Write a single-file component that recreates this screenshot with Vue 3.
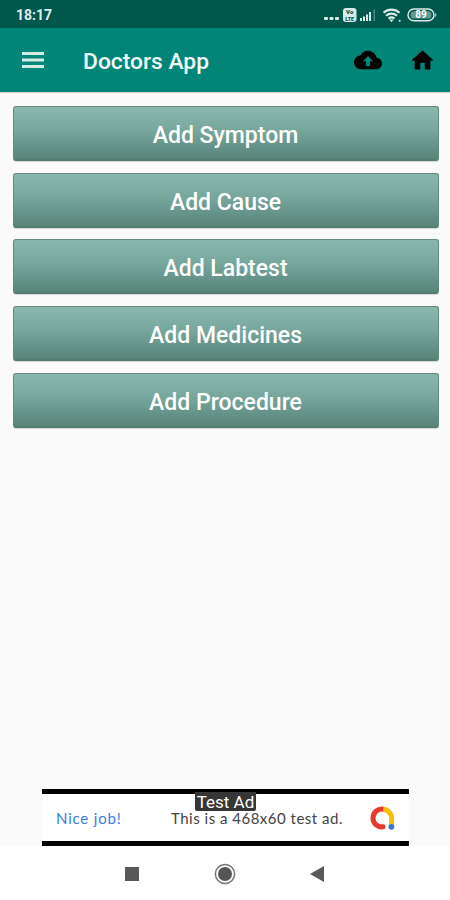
<template>
  <div class="screen">
    <!-- Status bar -->
    <div class="status-bar">
      <span class="clock">18:17</span>
      <svg class="status-icons" width="114" height="18" viewBox="0 0 114 18">
        <g fill="#d9ebe7">
          <rect x="1" y="12" width="4" height="3" rx="1" />
          <rect x="6.5" y="12" width="4" height="3" rx="1" />
          <rect x="12" y="12" width="4" height="3" rx="1" />
          <rect x="20" y="3" width="13.5" height="14" rx="3" />
          <rect x="37" y="13" width="2" height="3" />
          <rect x="40" y="11.5" width="2" height="4.5" />
          <rect x="43" y="9.5" width="2" height="6.5" />
          <rect x="46" y="7" width="2" height="9" />
          <rect x="50.5" y="4.5" width="1.5" height="11.5" opacity="0.35" />
        </g>
        <g fill="#00574b" font-family="Roboto, sans-serif" font-size="6" font-weight="900" text-anchor="middle">
          <text x="26.7" y="9.2">Vo</text>
          <text x="26.7" y="15.6" font-size="5.5">LTE</text>
        </g>
        <g fill="none" stroke="#d9ebe7" stroke-width="2.2">
          <path d="M60.5 7.7a12 12 0 0 1 16 0" />
          <path d="M63 10.7a8.3 8.3 0 0 1 11 0" />
          <path d="M65.6 13.6a4.6 4.6 0 0 1 5.8 0" />
        </g>
        <path d="M66.3 14.6h4.4l-2.2 2.6z" fill="#d9ebe7" />
        <circle cx="76.7" cy="15.8" r="1" fill="#d9ebe7" />
        <rect x="85" y="4" width="26" height="11.8" rx="5.9" fill="none" stroke="#d9ebe7" stroke-width="1.4" />
        <rect x="87.5" y="6.3" width="21" height="7.2" rx="3.6" fill="#d9ebe7" opacity="0.45" />
        <path d="M112.3 7.8q2 2.2 0 4.5z" fill="#d9ebe7" />
        <text x="98" y="13.4" fill="#fff" font-family="Roboto, sans-serif" font-size="10" font-weight="700" text-anchor="middle">89</text>
      </svg>
    </div>

    <!-- Toolbar -->
    <header class="toolbar">
      <button class="icon-btn menu-btn" aria-label="Menu">
        <svg width="22" height="16" viewBox="0 0 22 16">
          <path d="M0 1.5h22M0 8h22M0 14.5h22" stroke="#d5ede8" stroke-width="2.8" />
        </svg>
      </button>
      <h1 class="title">Doctors App</h1>
      <button class="icon-btn cloud-btn" aria-label="Upload">
        <svg width="28" height="28" viewBox="0 0 24 24">
          <path d="M19.35 10.04C18.67 6.59 15.64 4 12 4 9.11 4 6.6 5.64 5.35 8.04 2.34 8.36 0 10.91 0 14c0 3.31 2.69 6 6 6h13c2.76 0 5-2.24 5-5 0-2.64-2.05-4.78-4.65-4.96z" />
          <path d="M13.7 13v4.3h-3.4V13H7.6L12 8.6l4.4 4.4z" fill="#008577" />
        </svg>
      </button>
      <button class="icon-btn" aria-label="Home">
        <svg width="27" height="27" viewBox="0 0 24 24">
          <path d="M10 20v-6h4v6h5v-8h3L12 3 2 12h3v8z" />
        </svg>
      </button>
    </header>

    <main class="actions">
      <button v-for="label in actions" :key="label" class="action-btn">{{ label }}</button>
    </main>

    <!-- Ad banner -->
    <div class="ad">
      <span class="ad-badge">Test Ad</span>
      <span class="ad-praise">Nice job!</span>
      <span class="ad-text">This is a 468x60 test ad.</span>
      <svg class="ad-logo" width="26" height="26" viewBox="0 0 26 26">
        <g fill="none" stroke-width="5">
          <path d="M12.5 4.2A9 9 0 0 1 21.6 13v7" stroke="#fbbc04" />
          <path d="M13.2 4.2a8.9 8.9 0 1 0 0 17.6" stroke="#e53b2c" />
        </g>
        <circle cx="13" cy="21.8" r="2.5" fill="#e53b2c" />
        <circle cx="21.4" cy="21.8" r="2.9" fill="#3478d4" />
      </svg>
    </div>

    <!-- System navigation -->
    <nav class="system-nav">
      <svg width="14" height="14" viewBox="0 0 14 14"><path d="M0 0h14v14H0z" fill="#595959" /></svg>
      <svg width="22" height="22" viewBox="0 0 22 22">
        <circle cx="11" cy="11" r="9.6" fill="none" stroke="#777" stroke-width="1.5" />
        <circle cx="11" cy="11" r="7" fill="#555" />
      </svg>
      <svg width="14" height="16" viewBox="0 0 14 16"><path d="M14 0v16L0 8z" fill="#595959" /></svg>
    </nav>
  </div>
</template>

<script setup>
const actions = ['Add Symptom', 'Add Cause', 'Add Labtest', 'Add Medicines', 'Add Procedure']
</script>

<style>
body {
  margin: 0;
}
</style>

<style scoped>
.screen {
  width: 450px;
  height: 900px;
  display: flex;
  flex-direction: column;
  background: #fafafa;
  font-family: Roboto, sans-serif;
  overflow: hidden;
}

.status-bar {
  height: 28px;
  flex: none;
  box-sizing: border-box;
  display: flex;
  align-items: center;
  justify-content: space-between;
  padding: 2px 13px 0 16px;
  background: #00574b;
}

.clock {
  color: #e1efec;
  font-size: 14px;
  font-weight: 700;
}

.status-icons {
  display: block;
  margin-top: -2px;
}

.toolbar {
  height: 64px;
  flex: none;
  box-sizing: border-box;
  display: flex;
  align-items: center;
  padding: 0 14px 0 21.5px;
  background: #008577;
  box-shadow: 0 1px 1px rgba(0, 0, 0, 0.15);
}

.icon-btn {
  display: flex;
  padding: 0;
  border: none;
  background: none;
}

.title {
  flex: 1;
  margin: 2px 0 0 39.5px;
  color: #f2fbf9;
  font-size: 22.8px;
  font-weight: 500;
}

.cloud-btn {
  margin-right: 27px;
}

.actions {
  flex: 1;
  display: flex;
  flex-direction: column;
  gap: 11.7px;
  padding: 14px 11.5px 0 12.5px;
}

.action-btn {
  height: 55px;
  flex: none;
  padding: 5px 0 0;
  border: 1px solid #64897f;
  border-bottom: 2px solid #557c71;
  border-radius: 3px;
  background: linear-gradient(#8ab8ae, #77a69d 45%, #588479);
  box-shadow: 0 1px 1px rgba(0, 0, 0, 0.15);
  color: #fff;
  font-family: inherit;
  font-size: 23px;
  font-weight: 500;
}

.ad {
  position: relative;
  width: 367px;
  height: 57px;
  flex: none;
  box-sizing: border-box;
  display: flex;
  align-items: center;
  margin-left: 42px;
  padding: 0 13px 0 14px;
  border: solid #000;
  border-width: 5px 0;
  background: #fff;
  font-family: Lato, sans-serif;
  white-space: nowrap;
}

.ad-badge {
  position: absolute;
  top: -2px;
  left: 153px;
  width: 61px;
  height: 19px;
  border-radius: 0 0 2px 2px;
  background: #363636;
  color: #fff;
  font-family: Roboto, sans-serif;
  font-size: 17px;
  line-height: 20px;
  text-align: center;
}

.ad-praise {
  width: 115px;
  color: #3b7ddd;
  font-size: 15px;
  letter-spacing: 0.8px;
}

.ad-text {
  flex: 1;
  color: #444;
  font-size: 15px;
  letter-spacing: 0.5px;
}

.system-nav {
  height: 54px;
  flex: none;
  box-sizing: border-box;
  display: flex;
  align-items: center;
  justify-content: space-between;
  padding: 2px 126px 0 125px;
  background: #fefefe;
}
</style>
